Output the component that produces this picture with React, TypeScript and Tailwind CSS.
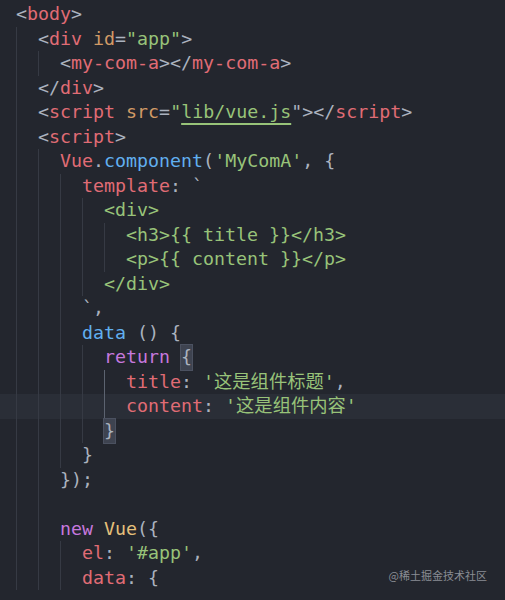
import React from 'react';

type Tok = [string, string, string?];

type Line = {
  indent: number;
  toks: Tok[];
  active?: boolean;
};

// token colours
const p = 'text-[#abb2bf]';
const r = 'text-[#e06c75]';
const g = 'text-[#98c379]';
const o = 'text-[#d19a66]';
const b = 'text-[#61afef]';
const v = 'text-[#c678dd]';
const y = 'text-[#e5c07b]';

const box = 'bg-[#3e4350] outline outline-1 outline-[#4b5160]';
const link = 'underline decoration-[#98c379] decoration-2 underline-offset-[5px]';

const lines: Line[] = [
  { indent: 0, toks: [['<', p], ['body', r], ['>', p]] },
  { indent: 1, toks: [['<', p], ['div', r], [' ', p], ['id', o], ['=', p], ['"app"', g], ['>', p]] },
  { indent: 2, toks: [['<', p], ['my-com-a', r], ['></', p], ['my-com-a', r], ['>', p]] },
  { indent: 1, toks: [['</', p], ['div', r], ['>', p]] },
  {
    indent: 1,
    toks: [
      ['<', p], ['script', r], [' ', p], ['src', o], ['=', p], ['"', g],
      ['lib/vue.js', g, link], ['"', p], ['></', p], ['script', r], ['>', p],
    ],
  },
  { indent: 1, toks: [['<', p], ['script', r], ['>', p]] },
  { indent: 2, toks: [['Vue', r], ['.', p], ['component', b], ['(', p], ["'MyComA'", g], [', {', p]] },
  { indent: 3, toks: [['template', r], [': ', p], ['`', p]] },
  { indent: 4, toks: [['<div>', g]] },
  { indent: 5, toks: [['<h3>{{ title }}</h3>', g]] },
  { indent: 5, toks: [['<p>{{ content }}</p>', g]] },
  { indent: 4, toks: [['</div>', g]] },
  { indent: 3, toks: [['`,', p]] },
  { indent: 3, toks: [['data', b], [' () {', p]] },
  { indent: 4, toks: [['return', v], [' ', p], ['{', p, box]] },
  { indent: 5, toks: [['title', r], [': ', p], ["'这是组件标题'", g], [',', p]] },
  { indent: 5, toks: [['content', r], [': ', p], ["'这是组件内容'", g]], active: true },
  { indent: 4, toks: [['}', p, box]] },
  { indent: 3, toks: [['}', p]] },
  { indent: 2, toks: [['});', p]] },
  { indent: 2, toks: [] },
  { indent: 2, toks: [['new', v], [' ', p], ['Vue', y], ['({', p]] },
  { indent: 3, toks: [['el', r], [': ', p], ["'#app'", g], [',', p]] },
  { indent: 3, toks: [['data', r], [': ', p], ['{', p]] },
];

const CodeLine = ({ line, idx }: { line: Line; idx: number }) => {
  const guides = Array.from({ length: line.indent });
  return (
    <div className={`flex h-[24.5px] w-full items-stretch pl-4 ${line.active ? 'bg-[#2a2e37]' : ''}`}>
      {guides.map((_, i) => {
        // the return { ... } block has the brighter guide
        const bright = i === 4 && (idx === 15 || idx === 16);
        return (
          <span
            key={i}
            className={`w-[22px] shrink-0 border-l ${bright ? 'border-[#5c6370]' : 'border-[#363a44]'}`}
          />
        );
      })}
      <span className="flex items-center whitespace-pre">
        {line.toks.map((t, i) => (
          <span key={i} className={`${t[1]} ${t[2] ?? ''}`}>
            {t[0]}
          </span>
        ))}
      </span>
    </div>
  );
};

export default function App() {
  return (
    <div
      className="relative h-[600px] w-[505px] overflow-hidden bg-[#23262e] pt-[2px] text-[18.3px] leading-[24.5px]"
      style={{ fontFamily: '"DejaVu Sans Mono", "Noto Sans CJK SC", monospace' }}
    >
      {lines.map((line, i) => (
        <CodeLine key={i} line={line} idx={i} />
      ))}
      <div
        className="absolute bottom-[13px] right-[18px] text-[11px] text-[#8a8d94]"
        style={{ fontFamily: '"Noto Sans CJK SC", "Noto Sans", sans-serif' }}
      >
        @稀土掘金技术社区
      </div>
    </div>
  );
}
